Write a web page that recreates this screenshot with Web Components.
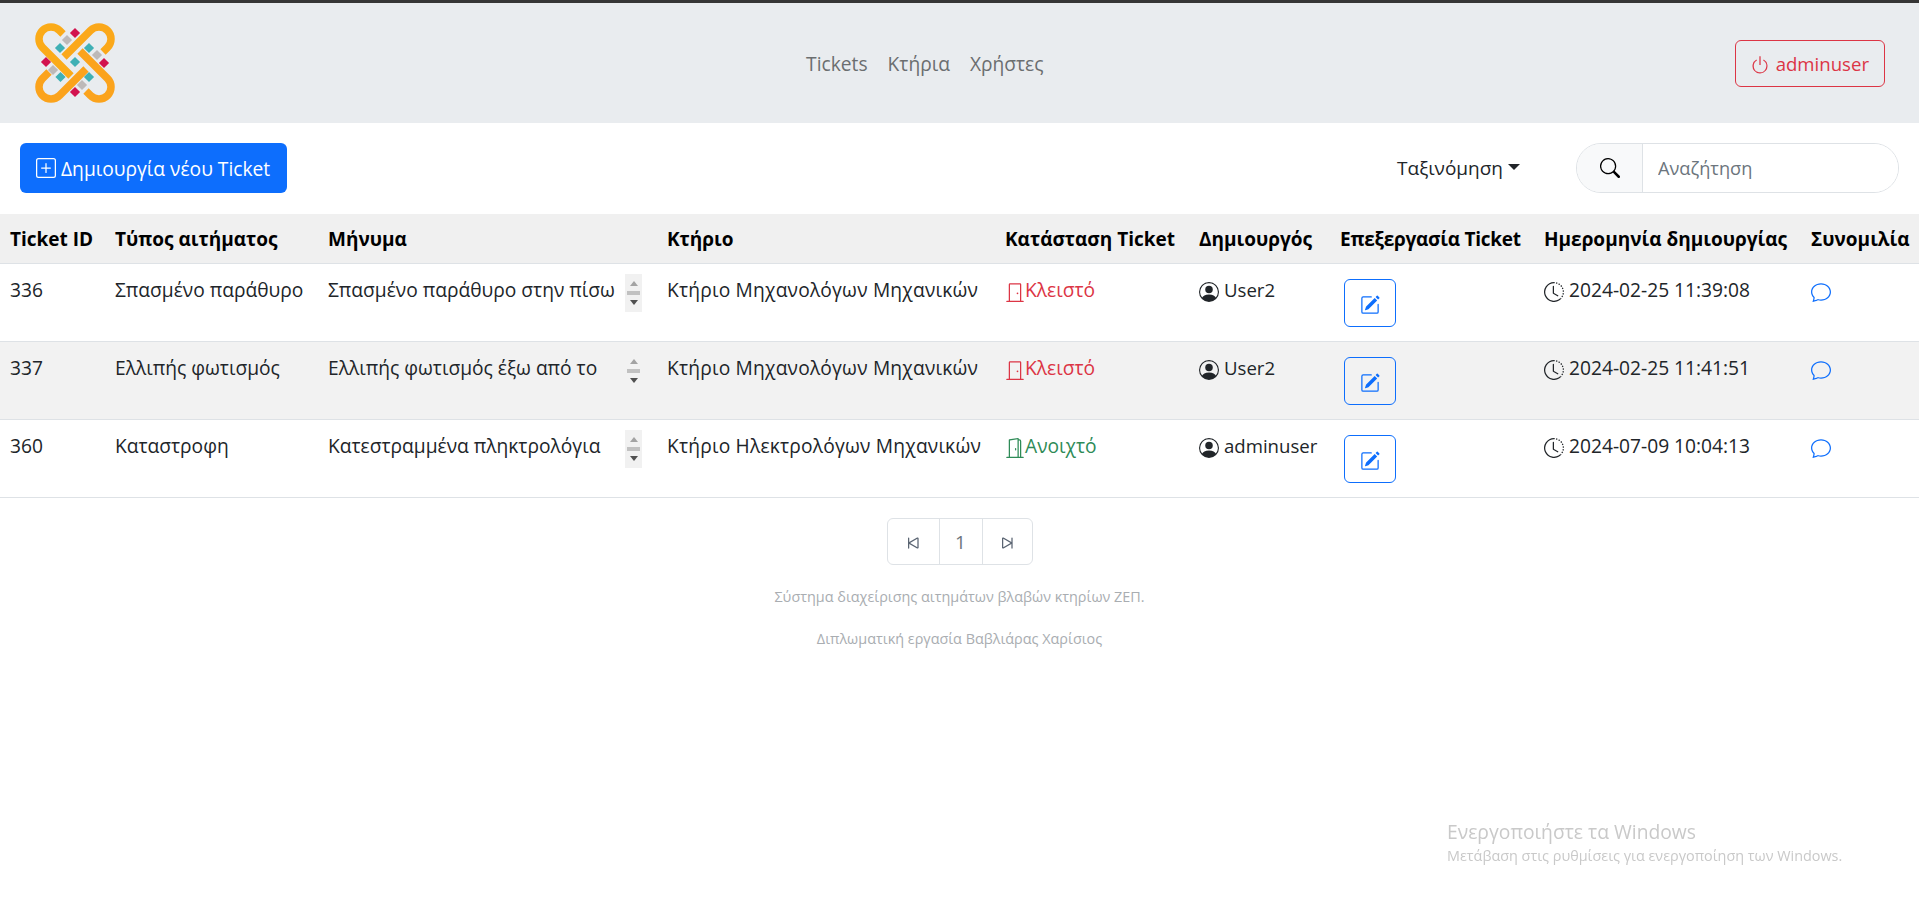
<!DOCTYPE html>
<html lang="el">
<head>
<meta charset="utf-8">
<title>Tickets</title>
<style>
    html, body { margin: 0; padding: 0; background: #fff; }
    body {
        font-family: "Open Sans", "Noto Sans", sans-serif;
        font-size: 19.2px;
        color: #212529;
        --ticket-cols: 105px 213px 339px 338px 194px 141px 204px 267px 1fr;
    }
</style>
</head>
<body>
<app-navbar></app-navbar>
<ticket-toolbar></ticket-toolbar>
<ticket-table>
    <ticket-row ticket="336" kind="Σπασμένο παράθυρο" message="Σπασμένο παράθυρο στην πίσω" building="Κτήριο Μηχανολόγων Μηχανικών" state="closed" author="User2" created="2024-02-25 11:39:08"></ticket-row>
    <ticket-row ticket="337" kind="Ελλιπής φωτισμός" message="Ελλιπής φωτισμός έξω από το" building="Κτήριο Μηχανολόγων Μηχανικών" state="closed" author="User2" created="2024-02-25 11:41:51" striped></ticket-row>
    <ticket-row ticket="360" kind="Καταστροφη" message="Κατεστραμμένα πληκτρολόγια" building="Κτήριο Ηλεκτρολόγων Μηχανικών" state="open" author="adminuser" created="2024-07-09 10:04:13"></ticket-row>
</ticket-table>
<ticket-pager></ticket-pager>
<app-footer></app-footer>
<windows-watermark></windows-watermark>

<script>
const ICONS = {
    plus: '<path d="M14 1a1 1 0 0 1 1 1v12a1 1 0 0 1-1 1H2a1 1 0 0 1-1-1V2a1 1 0 0 1 1-1zM2 0a2 2 0 0 0-2 2v12a2 2 0 0 0 2 2h12a2 2 0 0 0 2-2V2a2 2 0 0 0-2-2z"/><path d="M8 4a.5.5 0 0 1 .5.5v3h3a.5.5 0 0 1 0 1h-3v3a.5.5 0 0 1-1 0v-3h-3a.5.5 0 0 1 0-1h3v-3A.5.5 0 0 1 8 4"/>',
    power: '<path d="M7.5 1v7h1V1z"/><path d="M3 8.812a5 5 0 0 1 2.578-4.375l-.485-.874A6 6 0 1 0 11 3.616l-.501.865A5 5 0 1 1 3 8.812"/>',
    search: '<path d="M11.742 10.344a6.5 6.5 0 1 0-1.397 1.398h-.001q.044.06.098.115l3.85 3.85a1 1 0 0 0 1.415-1.414l-3.85-3.85a1 1 0 0 0-.115-.1zM12 6.5a5.5 5.5 0 1 1-11 0 5.5 5.5 0 0 1 11 0"/>',
    closed: '<path d="M3 2a1 1 0 0 1 1-1h8a1 1 0 0 1 1 1v13h1.5a.5.5 0 0 1 0 1h-13a.5.5 0 0 1 0-1H3zm1 13h8V2H4z"/><circle cx="10" cy="9" r=".7"/>',
    open: '<path d="M8.5 10c-.276 0-.5-.448-.5-1s.224-1 .5-1 .5.448.5 1-.224 1-.5 1"/><path d="M10.828.122A.5.5 0 0 1 11 .5V1h.5A1.5 1.5 0 0 1 13 2.5V15h1.5a.5.5 0 0 1 0 1h-13a.5.5 0 0 1 0-1H3V1.5a.5.5 0 0 1 .43-.495l7-1a.5.5 0 0 1 .398.117M11.5 2H11v13h1V2.5a.5.5 0 0 0-.5-.5M4 1.934V15h6V1.077z"/>',
    person: '<path d="M11 6a3 3 0 1 1-6 0 3 3 0 0 1 6 0"/><path fill-rule="evenodd" d="M0 8a8 8 0 1 1 16 0A8 8 0 0 1 0 8m8-7a7 7 0 0 0-5.468 11.37C3.242 11.226 4.805 10 8 10s4.757 1.225 5.468 2.37A7 7 0 0 0 8 1"/>',
    edit: '<path d="M15.502 1.94a.5.5 0 0 1 0 .706L14.459 3.69l-2-2L13.502.646a.5.5 0 0 1 .707 0l1.293 1.293zm-1.75 2.456-2-2L4.939 9.21a.5.5 0 0 0-.121.196l-.805 2.414a.25.25 0 0 0 .316.316l2.414-.805a.5.5 0 0 0 .196-.12l6.813-6.814z"/><path fill-rule="evenodd" d="M1 13.5A1.5 1.5 0 0 0 2.5 15h11a1.5 1.5 0 0 0 1.5-1.5v-6a.5.5 0 0 0-1 0v6a.5.5 0 0 1-.5.5h-11a.5.5 0 0 1-.5-.5v-11a.5.5 0 0 1 .5-.5H9a.5.5 0 0 0 0-1H2.5A1.5 1.5 0 0 0 1 2.5z"/>',
    clock: '<path d="M8.515 1.019A7 7 0 0 0 8 1V0a8 8 0 0 1 .589.022zm2.004.45a7 7 0 0 0-.985-.299l.219-.976q.576.129 1.126.342zm1.37.71a7 7 0 0 0-.439-.27l.493-.87a8 8 0 0 1 .979.654l-.615.789a7 7 0 0 0-.418-.302zm1.834 1.79a7 7 0 0 0-.653-.796l.724-.69q.406.429.747.91zm.744 1.352a7 7 0 0 0-.214-.468l.893-.45a8 8 0 0 1 .45 1.088l-.95.313a7 7 0 0 0-.179-.483m.53 2.507a7 7 0 0 0-.1-1.025l.985-.17q.1.58.116 1.17zm-.131 1.538q.05-.254.081-.51l.993.123a8 8 0 0 1-.23 1.155l-.964-.267q.069-.247.12-.501m-.952 2.379q.276-.436.486-.908l.914.405q-.24.54-.555 1.038zm-.964 1.205q.183-.183.35-.378l.758.653a8 8 0 0 1-.401.432z"/><path d="M8 1a7 7 0 1 0 4.95 11.95l.707.707A8.001 8.001 0 1 1 8 0z"/><path d="M7.5 3a.5.5 0 0 1 .5.5v5.21l3.248 1.856a.5.5 0 0 1-.496.868l-3.5-2A.5.5 0 0 1 7 9V3.5a.5.5 0 0 1 .5-.5"/>',
    chat: '<path d="M2.678 11.894a1 1 0 0 1 .287.801 11 11 0 0 1-.398 2c1.395-.323 2.247-.697 2.634-.893a1 1 0 0 1 .71-.074A8 8 0 0 0 8 14c3.996 0 7-2.807 7-6s-3.004-6-7-6-7 2.808-7 6c0 1.468.617 2.83 1.678 3.894m-.493 3.905a22 22 0 0 1-.713.129c-.2.032-.352-.176-.273-.362a10 10 0 0 0 .244-.637l.003-.01c.248-.72.45-1.548.524-2.319C.743 11.37 0 9.76 0 8c0-3.866 3.582-7 8-7s8 3.134 8 7-3.582 7-8 7a9 9 0 0 1-2.347-.306c-.52.263-1.639.742-3.468 1.105"/>',
    first: '<path d="M4 4a.5.5 0 0 1 1 0v3.248l6.267-3.636c.52-.302 1.233.043 1.233.696v7.384c0 .653-.713.998-1.233.696L5 8.752V12a.5.5 0 0 1-1 0zm7.5.633L5.696 8l5.804 3.367z"/>',
    last: '<path d="M12.5 4a.5.5 0 0 0-1 0v3.248L5.233 3.612C4.713 3.31 4 3.655 4 4.308v7.384c0 .653.713.998 1.233.696L11.5 8.752V12a.5.5 0 0 0 1 0zM5 4.633 10.804 8 5 11.367z"/>'
};

class BiIcon extends HTMLElement {
    connectedCallback() {
        if (this.shadowRoot) return;
        this.attachShadow({ mode: 'open' });
        const name = this.getAttribute('name');
        this.shadowRoot.innerHTML = `
        <style>
            :host { display: inline-flex; width: 20px; height: 20px; flex: none; }
            svg { width: 100%; height: 100%; display: block; fill: currentColor; }
        </style>
        <svg viewBox="0 0 16 16">${ICONS[name]}</svg>`;
    }
}
customElements.define('bi-icon', BiIcon);

class AppLogo extends HTMLElement {
    constructor() {
        super();
        this.attachShadow({ mode: 'open' });
        const diamond = (x, y, c) => `<rect x="${x - 3.6}" y="${y - 3.6}" width="7.2" height="7.2" fill="${c}" transform="rotate(45 ${x} ${y})"/>`;
        const red = [[40, 10], [11, 39], [69, 40], [40, 69]].map(p => diamond(p[0], p[1], '#d2124e')).join('');
        const grey = [[32, 17], [18, 47], [62, 32], [47, 62]].map(p => diamond(p[0], p[1], '#bdb9b8')).join('');
        const teal = [[25, 25], [54, 25], [40, 39], [25.5, 54], [54, 54]].map(p => diamond(p[0], p[1], '#3fb0b5')).join('');
        this.shadowRoot.innerHTML = `
        <style>
            :host { display: block; width: 80px; height: 80px; }
            svg { display: block; }
            path { fill: none; stroke-width: 7.5; }
        </style>
        <svg width="80" height="80" viewBox="0 0 80 80">
            <path stroke="#fbab18" d="M28 11 24.500 7.500A12 12 0 0 0 7.500 24.500L36 53"/>
            <path stroke="#fba81a" d="M29 34 55.500 7.500A12 12 0 0 1 72.500 24.500L68 29"/>
            <path stroke="#fba31c" d="M14 49 7.500 55.500A12 12 0 0 0 24.500 72.500L51 46"/>
            <path stroke="#fba31c" d="M45 28 72.500 55.500A12 12 0 0 1 55.500 72.500L51 68"/>
            ${red}${grey}${teal}
        </svg>`;
    }
}
customElements.define('app-logo', AppLogo);

class AppNavbar extends HTMLElement {
    constructor() {
        super();
        this.attachShadow({ mode: 'open' });
        this.shadowRoot.innerHTML = `
        <style>
            :host {
                display: flex;
                justify-content: space-between;
                align-items: center;
                height: 120px;
                background: #e9ecef;
                border-top: 3px solid #363636;
                padding: 0 34px 0 35px;
            }
            nav { display: flex; gap: 20px; color: #6b6e70; font-size: 19.2px; }
            a { color: inherit; text-decoration: none; }
            button {
                display: flex;
                align-items: center;
                gap: 6px;
                height: 47px;
                padding: 0 15px 0 14px;
                background: transparent;
                border: 1px solid #dc3545;
                border-radius: 6px;
                color: #dc3545;
                font: inherit;
                font-size: 18.6px;
            }
            bi-icon { margin-top: 3px; }
        </style>
        <app-logo></app-logo>
        <nav>
            <a href="#">Tickets</a>
            <a href="#">Κτήρια</a>
            <a href="#">Χρήστες</a>
        </nav>
        <button><bi-icon name="power"></bi-icon>adminuser</button>`;
    }
}
customElements.define('app-navbar', AppNavbar);

class TicketToolbar extends HTMLElement {
    constructor() {
        super();
        this.attachShadow({ mode: 'open' });
        this.shadowRoot.innerHTML = `
        <style>
            :host {
                display: flex;
                align-items: center;
                height: 50px;
                padding: 20px 20px 21px 20px;
                font-size: 19px;
            }
            .create {
                display: flex;
                align-items: center;
                gap: 5px;
                height: 50px;
                padding: 0 17px 0 16px;
                background: #0d6efd;
                border: 0;
                border-radius: 6px;
                color: #fff;
                font: inherit;
                font-size: 19.2px;
            }
            .sort {
                margin-left: auto;
                display: flex;
                align-items: center;
                gap: 5px;
                color: #212529;
            }
            .caret {
                width: 0; height: 0;
                border-left: 6px solid transparent;
                border-right: 6px solid transparent;
                border-top: 6px solid #212529;
                margin-bottom: 3px;
            }
            .search {
                margin-left: 56px;
                width: 323px;
                height: 50px;
                box-sizing: border-box;
                display: flex;
                border: 1px solid #dee2e6;
                border-radius: 25px;
                overflow: hidden;
            }
            .search span {
                width: 65px;
                display: flex;
                align-items: center;
                justify-content: center;
                background: #f8f9fa;
                border-right: 1px solid #dee2e6;
                color: #000;
            }
            .search input {
                flex: 1;
                min-width: 0;
                border: 0;
                outline: 0;
                padding: 0 15px;
                font: inherit;
                font-size: 18.2px;
                color: #212529;
            }
            .search input::placeholder { color: #6c757d; opacity: 1; }
        </style>
        <button class="create"><bi-icon name="plus"></bi-icon>Δημιουργία νέου Ticket</button>
        <div class="sort">Ταξινόμηση<i class="caret"></i></div>
        <div class="search">
            <span><bi-icon name="search"></bi-icon></span>
            <input placeholder="Αναζήτηση">
        </div>`;
    }
}
customElements.define('ticket-toolbar', TicketToolbar);

class TicketTable extends HTMLElement {
    constructor() {
        super();
        this.attachShadow({ mode: 'open' });
        const heads = ['Ticket ID', 'Τύπος αιτήματος', 'Μήνυμα', 'Κτήριο', 'Κατάσταση Ticket', 'Δημιουργός', 'Επεξεργασία Ticket', 'Ημερομηνία δημιουργίας', 'Συνομιλία'];
        this.shadowRoot.innerHTML = `
        <style>
            :host { display: block; }
            header {
                display: grid;
                grid-template-columns: var(--ticket-cols);
                align-items: center;
                height: 50px;
                box-sizing: border-box;
                background: #f0f0f0;
                border-bottom: 1px solid #dee2e6;
                font-weight: 700;
                font-size: 19px;
                color: #000;
            }
            header div { padding-left: 10px; white-space: nowrap; }
            header div:nth-child(7) { letter-spacing: -.25px; }
        </style>
        <header>${heads.map(h => `<div>${h}</div>`).join('')}</header>
        <slot></slot>`;
    }
}
customElements.define('ticket-table', TicketTable);

class TicketRow extends HTMLElement {
    constructor() {
        super();
        this.attachShadow({ mode: 'open' });
    }

    connectedCallback() {
        const a = name => this.getAttribute(name);
        const isOpen = a('state') === 'open';
        this.shadowRoot.innerHTML = `
        <style>
            :host {
                display: grid;
                grid-template-columns: var(--ticket-cols);
                height: 78px;
                box-sizing: border-box;
                border-bottom: 1px solid #dee2e6;
                color: #212529;
            }
            :host([striped]) { background: #f2f2f2; }
            .cell {
                padding: 12px 0 0 10px;
                line-height: 27px;
                white-space: nowrap;
                overflow: hidden;
            }
            .with-icon { display: flex; align-items: flex-start; }
            .with-icon bi-icon { margin-top: 6px; }
            .message { display: flex; align-items: flex-start; padding: 10px 15px 0 10px; justify-content: space-between; overflow: visible; }
            .message span { margin-top: 2px; }
            .scrollbar {
                width: 17px;
                height: 38px;
                background: #f1f1f1;
                display: flex;
                flex-direction: column;
                align-items: center;
                justify-content: space-between;
                padding: 7px 0;
                box-sizing: border-box;
                flex: none;
            }
            :host([striped]) .scrollbar { background: #f2f2f2; }
            .up { border: 4px solid transparent; border-top: 0; border-bottom: 5px solid #a3a3a3; }
            .thumb { width: 13px; height: 4px; background: #c1c1c1; }
            .down { border: 4px solid transparent; border-bottom: 0; border-top: 5px solid #505050; }
            .building { letter-spacing: .2px; }
            .author { font-size: 18.6px; }
            .state { color: ${isOpen ? '#2e8b57' : '#dc3545'}; }
            .edit {
                display: flex;
                align-items: center;
                justify-content: center;
                width: 52px;
                height: 48px;
                padding: 4px 0 0;
                margin: 3px 0 0 4px;
                box-sizing: border-box;
                background: transparent;
                border: 1px solid #0d6efd;
                border-radius: 6px;
                color: #0d6efd;
            }
            .gap { margin-right: 5px; }
            .chat { color: #0d6efd; }
        </style>
        <div class="cell">${a('ticket')}</div>
        <div class="cell">${a('kind')}</div>
        <div class="cell message"><span>${a('message')}</span>
            <div class="scrollbar"><i class="up"></i><i class="thumb"></i><i class="down"></i></div>
        </div>
        <div class="cell building">${a('building')}</div>
        <div class="cell with-icon state"><bi-icon name="${isOpen ? 'open' : 'closed'}"></bi-icon>${isOpen ? 'Ανοιχτό' : 'Κλειστό'}</div>
        <div class="cell with-icon author"><bi-icon name="person" class="gap"></bi-icon>${a('author')}</div>
        <div class="cell"><button class="edit"><bi-icon name="edit"></bi-icon></button></div>
        <div class="cell with-icon"><bi-icon name="clock" class="gap"></bi-icon>${a('created')}</div>
        <div class="cell with-icon chat"><bi-icon name="chat"></bi-icon></div>`;
    }
}
customElements.define('ticket-row', TicketRow);

class TicketPager extends HTMLElement {
    constructor() {
        super();
        this.attachShadow({ mode: 'open' });
        this.shadowRoot.innerHTML = `
        <style>
            :host { display: flex; justify-content: center; margin-top: 20px; }
            ul {
                display: flex;
                height: 47px;
                margin: 0;
                padding: 0;
                list-style: none;
                border: 1px solid #dee2e6;
                border-radius: 6px;
                box-sizing: border-box;
                color: #6c757d;
            }
            li { display: flex; align-items: center; justify-content: center; box-sizing: border-box; }
            li + li { border-left: 1px solid #dee2e6; }
            li:nth-child(1) { width: 51px; padding-top: 3px; color: #5a6472; }
            li:nth-child(2) { width: 43px; font-size: 19px; }
            li:nth-child(3) { width: 50px; padding-top: 3px; color: #5a6472; }
        </style>
        <ul>
            <li><bi-icon name="first"></bi-icon></li>
            <li>1</li>
            <li><bi-icon name="last"></bi-icon></li>
        </ul>`;
    }
}
customElements.define('ticket-pager', TicketPager);

class AppFooter extends HTMLElement {
    constructor() {
        super();
        this.attachShadow({ mode: 'open' });
        this.shadowRoot.innerHTML = `
        <style>
            :host { display: block; margin-top: 21px; text-align: center; color: #a9adb1; font-size: 14.4px; }
            p { margin: 0 0 21px; line-height: 21px; }
        </style>
        <p>Σύστημα διαχείρισης αιτημάτων βλαβών κτηρίων ΖΕΠ.</p>
        <p>Διπλωματική εργασία Βαβλιάρας Χαρίσιος</p>`;
    }
}
customElements.define('app-footer', AppFooter);

// overlay drawn by the OS, sits above the page
class WindowsWatermark extends HTMLElement {
    constructor() {
        super();
        this.attachShadow({ mode: 'open' });
        this.shadowRoot.innerHTML = `
        <style>
            :host { position: fixed; left: 1447px; top: 818px; color: #c9c9c9; pointer-events: none; white-space: nowrap; }
            div { font-size: 19.3px; line-height: 28px; }
            small { display: block; font-size: 14.4px; line-height: 19px; }
        </style>
        <div>Ενεργοποιήστε τα Windows</div>
        <small>Μετάβαση στις ρυθμίσεις για ενεργοποίηση των Windows.</small>`;
    }
}
customElements.define('windows-watermark', WindowsWatermark);
</script>
</body>
</html>
